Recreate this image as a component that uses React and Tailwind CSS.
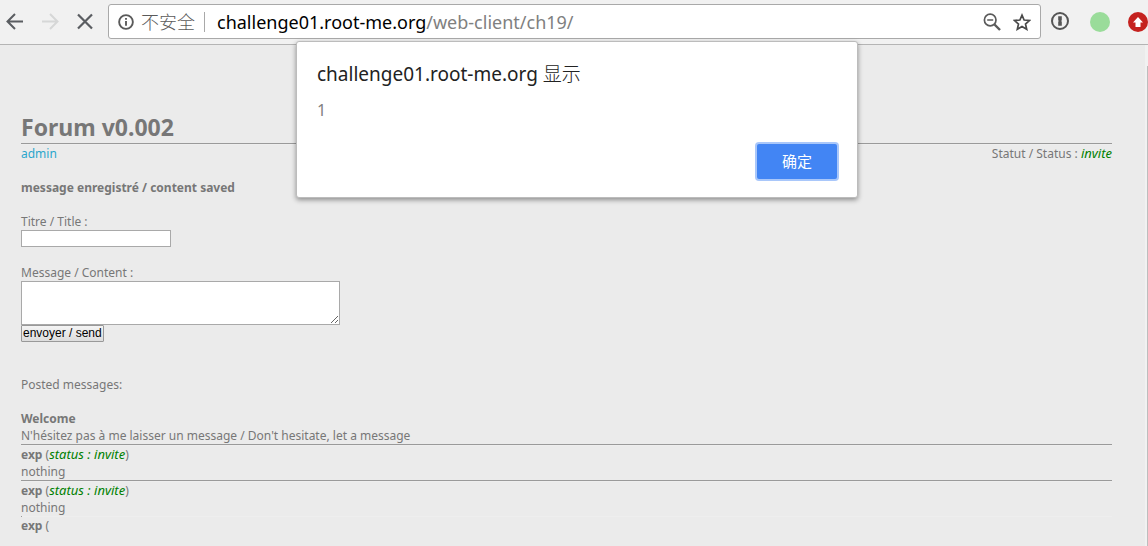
function Toolbar() {
  return (
    <header className="flex h-[45px] items-start border-b border-[#b4b4b4] bg-[#f1f1f1] pl-[5px] pt-1">
      <nav className="flex h-[35px] items-center gap-[15px]" aria-label="Navigation">
        <button type="button" aria-label="Back" className="block">
          <svg width="20" height="20" viewBox="0 0 20 20" fill="none" stroke="#5a5d61" strokeWidth="2">
            <path d="M18 9.5H3M10 2L2.500 9.500L10 17" />
          </svg>
        </button>
        <button type="button" aria-label="Forward" className="block">
          <svg width="20" height="20" viewBox="0 0 20 20" fill="none" stroke="#d6d7d7" strokeWidth="2">
            <path d="M2 9.500H17M10 2L17.500 9.500L10 17" />
          </svg>
        </button>
        <button type="button" aria-label="Stop" className="block">
          <svg width="20" height="20" viewBox="0 0 20 20" fill="none" stroke="#5a5d61" strokeWidth="2.200">
            <path d="M3 2.500L17 16.500M17 2.500L3 16.500" />
          </svg>
        </button>
      </nav>
      <div className="ml-[13px] flex h-[35px] min-w-0 flex-1 items-center rounded-[3px] border border-[#a9a9a9] bg-white pl-[9px] pr-[9px] font-['Noto_Sans','Noto_Sans_CJK_SC',sans-serif] text-lg">
        <svg width="16" height="16" viewBox="0 0 17 17" fill="none" stroke="#5a5a5a" strokeWidth="2">
          <circle cx="8.500" cy="8.500" r="7.300" />
          <path d="M8.500 7.500V12.500M8.500 4.300V6.200" />
        </svg>
        <span className="ml-[7px] font-light text-[#5a5a5a]">不安全</span>
        <span className="ml-[9px] mr-3 h-5 w-px shrink-0 bg-[#a9a9a9]" />
        <span className="flex-1 truncate text-black">
          challenge01.root-me.org<span className="text-[#808080]">/web-client/ch19/</span>
        </span>
        <button type="button" aria-label="Zoom" className="mr-3 block">
          <svg width="18" height="18" viewBox="0 0 18 18" fill="none" stroke="#5a5a5a">
            <circle cx="7.200" cy="7" r="5.800" strokeWidth="1.700" />
            <path d="M4.200 7H10.200" strokeWidth="1.500" />
            <path d="M11.500 11.500L17 17" strokeWidth="2.400" />
          </svg>
        </button>
        <button type="button" aria-label="Bookmark" className="block">
          <svg width="18" height="18" viewBox="0 0 18 18" fill="none" stroke="#4a4a4a" strokeWidth="1.700">
            <path d="M9 2.200L11.100 7L16.500 7.500L12.500 11L13.700 16.300L9 13.500L4.300 16.300L5.500 11L1.500 7.500L6.900 7Z" />
          </svg>
        </button>
      </div>
      <div className="ml-[10px] flex h-[35px] shrink-0 items-center gap-5 overflow-hidden">
        <button type="button" aria-label="Password manager" className="block">
          <svg width="19" height="19" viewBox="0 0 19 19">
            <circle cx="9" cy="9" r="8" fill="none" stroke="#555" strokeWidth="2" />
            <path d="M7.200 4.200H10.800V8.200L10.200 9L10.800 9.800V13.800H7.200V9.800L7.800 9L7.200 8.200Z" fill="#555" />
          </svg>
        </button>
        <button type="button" aria-label="Status" className="block size-5 rounded-full bg-[#9adc9a]" />
        <button type="button" aria-label="Upload" className="-ml-[2px] block w-5">
          <svg width="20" height="20" viewBox="0 0 20 20">
            <circle cx="10" cy="10" r="10" fill="#c5221f" />
            <path d="M10 5L15 10.500H12.500V15H7.500V10.500H5Z" fill="#fff" />
          </svg>
        </button>
      </div>
    </header>
  );
}

function Rule({ faint = false }) {
  return (
    <hr
      className={
        faint
          ? "h-px border-0 border-l border-l-[#9a9a9a] bg-[#eeeeee]"
          : "h-[2px] border-0 border-t border-t-[#9a9a9a] bg-[#eeeeee]"
      }
    />
  );
}

function Post() {
  return (
    <article>
      <p>
        <b>exp</b> (<i className="text-[13px] leading-none text-[#008000]">status : invite</i>)
      </p>
      <p>nothing</p>
    </article>
  );
}

function Forum() {
  return (
    <main className="min-w-0 flex-1 pb-3 pl-[21px] pr-[33px] pt-[66px] font-['Noto_Sans',sans-serif] text-xs leading-[17px] text-[#777777]">
      <h1 className="text-[23px] font-bold leading-8">Forum v0.002</h1>
      <Rule />
      <div className="flex justify-between">
        <a href="#admin" className="text-[#2ba6cb]">admin</a>
        <p>
          Statut / Status : <i className="text-[13px] leading-none text-[#008000]">invite</i>
        </p>
      </div>
      <p className="mt-[17px] font-bold">message enregistré / content saved</p>
      <form className="mt-[17px]" onSubmit={(e) => e.preventDefault()}>
        <label htmlFor="title" className="block">Titre / Title :</label>
        <input id="title" type="text" className="block h-[17px] w-[150px] border border-[#a9a9a9] bg-white px-px text-black" />
        <label htmlFor="content" className="mt-[17px] block">Message / Content :</label>
        <textarea id="content" className="block h-11 w-[319px] resize border border-[#a9a9a9] bg-white px-px text-black" />
        <button
          type="submit"
          className="block h-[17px] rounded-[1px] border border-[#999999] bg-gradient-to-b from-[#f4f4f4] to-[#dddddd] px-px font-['Liberation_Sans',sans-serif] text-xs leading-[15px] text-black"
        >
          envoyer / send
        </button>
      </form>
      <p className="mt-[34px]">Posted messages:</p>
      <article className="mt-[17px]">
        <p className="font-bold">Welcome</p>
        <p>N'hésitez pas à me laisser un message / Don't hesitate, let a message</p>
      </article>
      <Rule />
      <Post />
      <Rule />
      <Post />
      <Rule faint />
      <p>
        <b>exp</b> (
      </p>
    </main>
  );
}

function AlertDialog() {
  return (
    <div
      role="alertdialog"
      aria-labelledby="alert-title"
      aria-describedby="alert-text"
      className="absolute left-1/2 top-[41px] ml-[-278px] flex w-[562px] flex-col rounded-[3px] border border-[#bcbcbc] bg-white px-5 py-[18px] font-['Noto_Sans','Noto_Sans_CJK_SC',sans-serif] shadow-[0_2px_5px_rgba(0,0,0,0.4)]"
    >
      <h2 id="alert-title" className="text-[19px] leading-7 text-[#222222]">
        challenge01.root-me.org <span className="font-light">显示</span>
      </h2>
      <p id="alert-text" className="mt-[10px] text-base leading-6 text-[#808080]">1</p>
      <button
        type="button"
        className="mt-[22px] h-[35px] w-20 self-end rounded-[2px] bg-[#4285f4] text-[15px] text-white ring-2 ring-[#a9c7fa]"
      >
        确定
      </button>
    </div>
  );
}

export default function App() {
  return (
    <div className="relative flex min-h-screen flex-col overflow-x-hidden bg-[#ebebeb]">
      <Toolbar />
      <div className="flex flex-1">
        <Forum />
        <div className="flex w-[3px] bg-[#f1f1f1] pl-[2px] pt-[21px]">
          <div className="w-px bg-[#bdbdbd]" />
        </div>
      </div>
      <AlertDialog />
    </div>
  );
}
